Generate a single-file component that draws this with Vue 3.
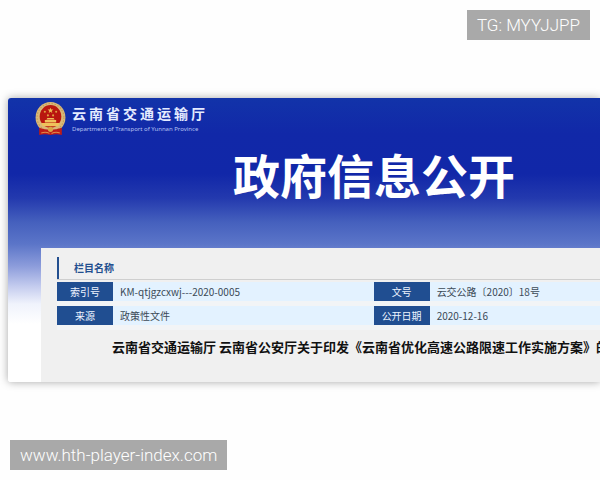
<script setup>
const records = [
  [
    { label: '索引号', value: 'KM-qtjgzcxwj---2020-0005' },
    { label: '文号', value: '云交公路〔2020〕18号' },
  ],
  [
    { label: '来源', value: '政策性文件' },
    { label: '公开日期', value: '2020-12-16' },
  ],
]
</script>

<template>
  <div class="page">
    <div class="tag tag-contact">TG: MYYJJPP</div>

    <main class="card">
      <header class="brand">
        <svg class="emblem" viewBox="0 0 60 66" aria-hidden="true">
          <ellipse cx="30" cy="30" rx="29" ry="30" fill="#d9b878" />
          <ellipse cx="30" cy="30" rx="26" ry="27" fill="none" stroke="#c39a52" stroke-width="2" stroke-dasharray="3 3" />
          <ellipse cx="30" cy="28" rx="21" ry="22" fill="#b9160f" />
          <path d="M30 11l1.500 3.600 4 .2-3.200 2.500 1.200 3.900-3.500-2.300-3.500 2.300 1.200-3.900-3.200-2.500 4-.2z" fill="#eebd52" />
          <g fill="#e0a040">
            <circle cx="19" cy="19" r="2" />
            <circle cx="41" cy="19" r="2" />
            <circle cx="25" cy="26" r="2" />
            <circle cx="35" cy="26" r="2" />
          </g>
          <path d="M22 34l2-3h12l2 3zM19 35h22v5H19zM12 41h36l-3 6H15z" fill="#efc25b" />
          <path d="M8 50q10 4 22 4t22-4v14q-11-3-22 0-11-3-22 0z" fill="#bd1c18" />
          <circle cx="30" cy="53" r="5" fill="#d9a646" />
          <path d="M12 60q9-3 16 1M32 61q8-4 16-1" fill="none" stroke="#e08b49" stroke-width="2" />
        </svg>
        <div class="brand-text">
          <div class="brand-name">云南省交通运输厅</div>
          <div class="brand-sub">Department of Transport of Yunnan Province</div>
        </div>
      </header>

      <h1 class="title">政府信息公开</h1>

      <section class="panel">
        <div class="section-head">
          <h2>栏目名称</h2>
        </div>
        <table class="records">
          <tbody>
            <tr v-for="(row, i) in records" :key="i">
              <template v-for="item in row" :key="item.label">
                <th scope="row">{{ item.label }}</th>
                <td>{{ item.value }}</td>
              </template>
            </tr>
          </tbody>
        </table>
        <h3 class="notice">云南省交通运输厅 云南省公安厅关于印发《云南省优化高速公路限速工作实施方案》的</h3>
      </section>
    </main>

    <div class="tag tag-site">www.hth-player-index.com</div>
  </div>
</template>

<style>
body {
  margin: 0;
  background: #fefefe;
}
</style>

<style scoped>
.page {
  display: flex;
  flex-direction: column;
  padding: 10px 0 10px 8px;
  overflow: hidden;
  font-family: "Noto Sans CJK SC", "Noto Sans", sans-serif;
}

.tag {
  padding: 0 10px;
  background: #a9a9a9;
  color: #fff;
  font-family: Roboto, "Liberation Sans", sans-serif;
  font-size: 17px;
  font-weight: 300;
  line-height: 30px;
  white-space: nowrap;
}

.tag-contact {
  align-self: flex-end;
  margin-right: 10px;
}

.tag-site {
  align-self: flex-start;
  margin-left: 2px;
}

.card {
  margin: 58px 0;
  border-radius: 3px 0 0 3px;
  background: linear-gradient(to bottom, #1233a9 0, #1128a8 36px, #1127a8 76px, #2339ae 100px, #4560bd 124px, #5b75c8 146px, #8c9cdb 168px, #c3cbee 188px, #f0f3fc 206px, #fff 226px);
  box-shadow: 0 0 8px rgba(0, 0, 0, 0.35);
}

.brand {
  display: flex;
  gap: 6px;
  padding: 4px 0 0 27px;
}

.emblem {
  width: 31px;
  height: 34px;
}

.brand-text {
  color: #e4ebff;
  white-space: nowrap;
}

.brand-name {
  font-size: 14px;
  font-weight: 700;
  line-height: 22px;
  letter-spacing: 3px;
}

.brand-sub {
  color: #b4c2f2;
  font-family: "Noto Sans", sans-serif;
  font-size: 6px;
  line-height: 10px;
}

.title {
  margin: 8px 0 0;
  padding-left: 225px;
  color: #fff;
  font-size: 47px;
  font-weight: 700;
  line-height: 60px;
  white-space: nowrap;
}

.panel {
  margin: 44px 0 0 33px;
  padding: 9px 0 24px 16px;
  background: #f0f0f0;
}

.section-head {
  margin-bottom: 2px;
  border-bottom: 1px solid #cfcfcf;
}

.section-head h2 {
  margin: 0;
  padding-left: 15px;
  border-left: 2px solid #234f8f;
  color: #234f8f;
  font-size: 10px;
  font-weight: 700;
  line-height: 22px;
}

.records {
  width: 100%;
  border-collapse: separate;
  border-spacing: 0;
  table-layout: fixed;
  font-size: 10px;
  line-height: 19px;
}

.records th,
.records td {
  padding: 0;
  border-bottom: 5px solid #f2f4f6;
  background-clip: padding-box;
  white-space: nowrap;
}

.records th {
  width: 56px;
  background-color: #204e91;
  color: #eef4ff;
  font-weight: 400;
  text-align: center;
}

.records td {
  background-color: #e3f2ff;
  color: #3c4a57;
  text-indent: 7px;
}

.records td:nth-child(2) {
  width: 48%;
}

.notice {
  margin: 6px 0 0;
  padding-left: 55px;
  color: #111;
  font-size: 13px;
  font-weight: 700;
  line-height: 22px;
  white-space: nowrap;
}
</style>
